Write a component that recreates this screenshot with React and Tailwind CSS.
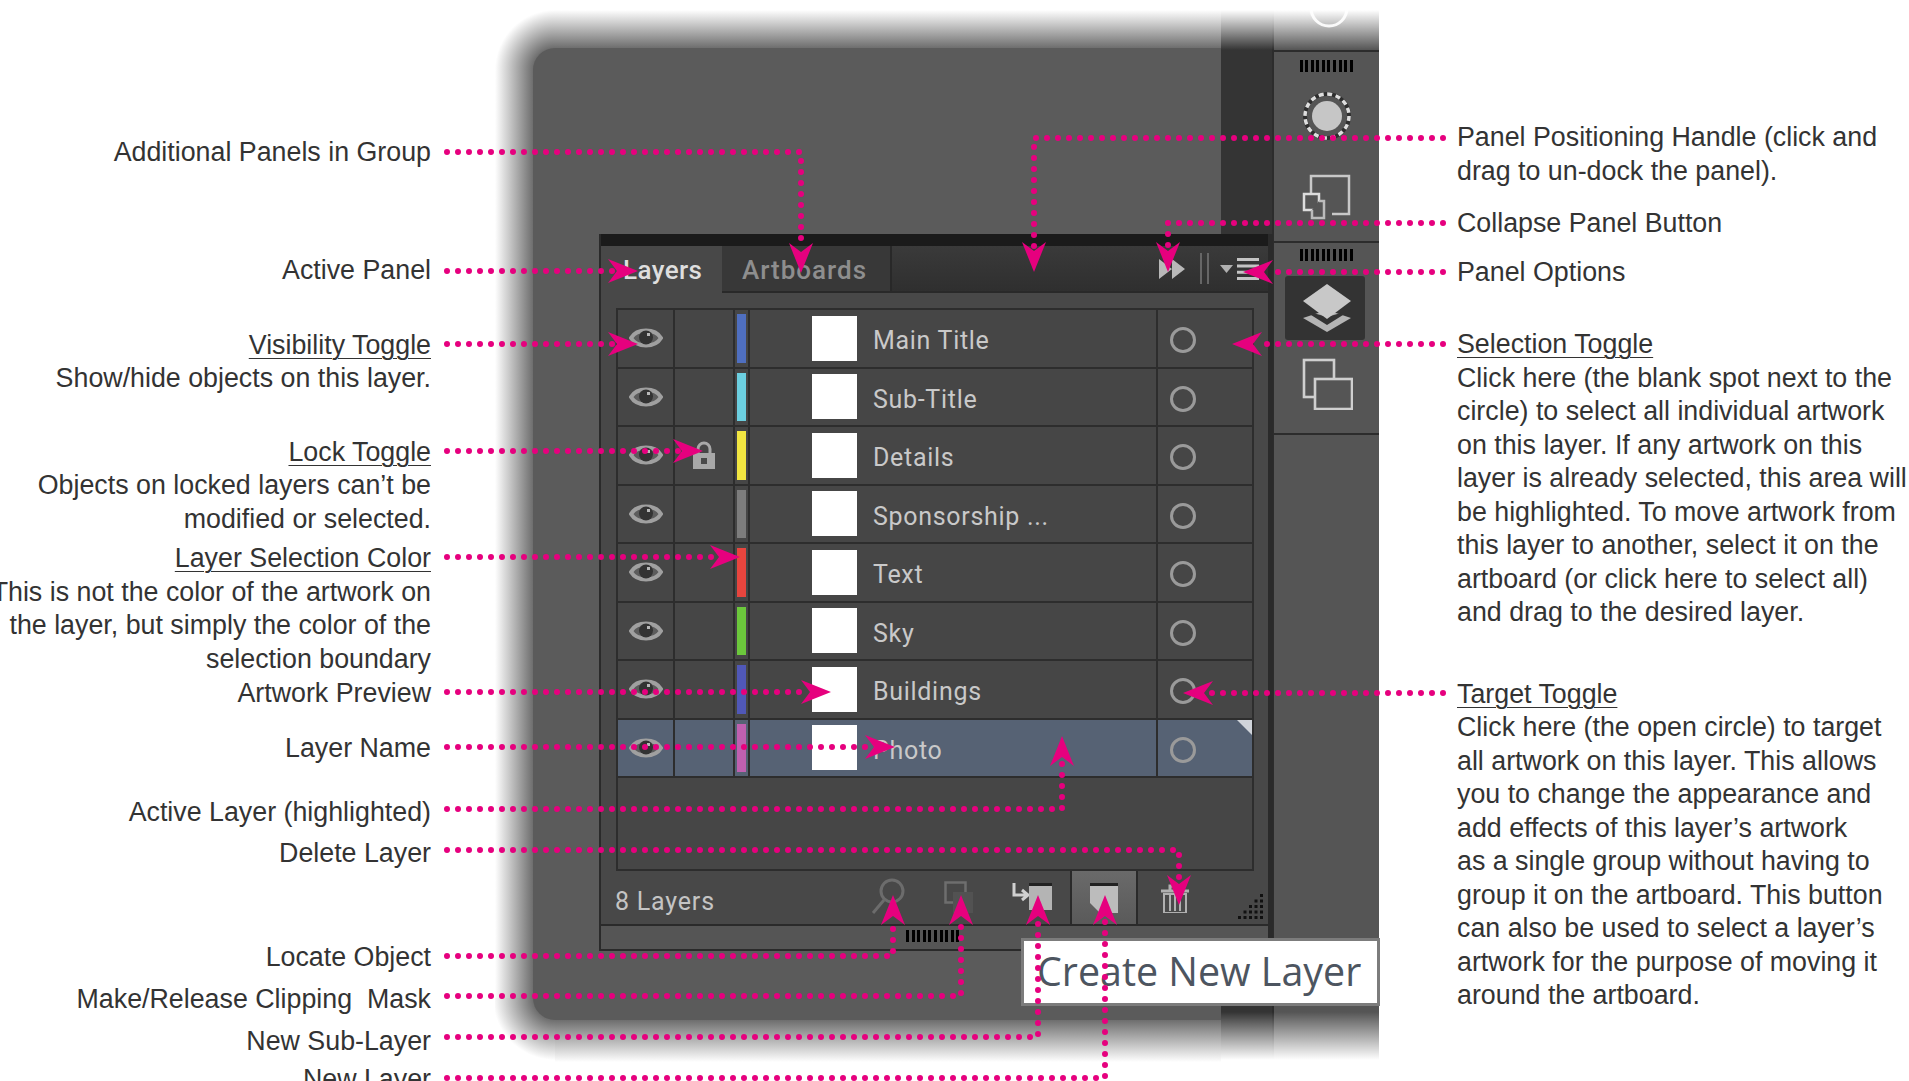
const labelFont = "font-['Liberation_Sans',Arial,sans-serif] text-[26.8px] leading-[33.5px] text-[#333] whitespace-nowrap";

// left column callouts, mt is the gap to the previous block
const leftLabels = [
  { mt: "mt-[136px]", lines: ["Additional Panels in Group"] },
  { mt: "mt-[84.5px]", lines: ["Active Panel"] },
  { mt: "mt-[41px]", title: "Visibility Toggle", lines: ["Show/hide objects on this layer."] },
  { mt: "mt-[40px]", title: "Lock Toggle", lines: ["Objects on locked layers can’t be", "modified or selected."] },
  { mt: "mt-[6px]", title: "Layer Selection Color", lines: ["This is not the color of the artwork on", "the layer, but simply the color of the", "selection boundary"] },
  { mt: "mt-[1px]", lines: ["Artwork Preview"] },
  { mt: "mt-[21.5px]", lines: ["Layer Name"] },
  { mt: "mt-[30px]", lines: ["Active Layer (highlighted)"] },
  { mt: "mt-[8px]", lines: ["Delete Layer"] },
  { mt: "mt-[70.5px]", lines: ["Locate Object"] },
  { mt: "mt-[8px]", lines: ["Make/Release Clipping\u00a0 Mask"] },
  { mt: "mt-[8.5px]", lines: ["New Sub-Layer"] },
  { mt: "mt-[4.5px]", lines: ["New Layer"] },
];

const rightLabels = [
  { mt: "mt-[121px]", lines: ["Panel Positioning Handle (click and", "drag to un-dock the panel)."] },
  { mt: "mt-[19px]", lines: ["Collapse Panel Button"] },
  { mt: "mt-[15.5px]", lines: ["Panel Options"] },
  {
    mt: "mt-[38.5px]",
    title: "Selection Toggle",
    lines: [
      "Click here (the blank spot next to the",
      "circle) to select all individual artwork",
      "on this layer. If any artwork on this",
      "layer is already selected, this area will",
      "be highlighted. To move artwork from",
      "this layer to another, select it on the",
      "artboard (or click here to select all)",
      "and drag to the desired layer.",
    ],
  },
  {
    mt: "mt-[48px]",
    title: "Target Toggle",
    lines: [
      "Click here (the open circle) to target",
      "all artwork on this layer. This allows",
      "you to change the appearance and",
      "add effects of this layer’s artwork",
      "as a single group without having to",
      "group it on the artboard. This button",
      "can also be used to select a layer’s",
      "artwork for the purpose of moving it",
      "around the artboard.",
    ],
  },
];

const layers = [
  { name: "Main Title", bar: "bg-[#4f6fc0]" },
  { name: "Sub-Title", bar: "bg-[#6ccfe0]" },
  { name: "Details", bar: "bg-[#f2e641]", locked: true },
  { name: "Sponsorship ...", bar: "bg-[#7d7d7d]" },
  { name: "Text", bar: "bg-[#e8453e]" },
  { name: "Sky", bar: "bg-[#6cc83c]" },
  { name: "Buildings", bar: "bg-[#5058b8]" },
  { name: "Photo", bar: "bg-[#c060b0]", active: true },
];

// leader lines in page coordinates, the last point is the arrow tip
const leaders = [
  [[447, 152], [801, 152], [801, 273]],
  [[1443, 138], [1034, 138], [1034, 272]],
  [[1443, 223], [1168, 223], [1168, 272]],
  [[1443, 272], [1243, 272]],
  [[447, 271], [638, 271]],
  [[447, 344], [638, 344]],
  [[1443, 344], [1232, 344]],
  [[447, 451], [703, 451]],
  [[447, 557], [740, 557]],
  [[447, 692], [831, 692]],
  [[1443, 693], [1183, 693]],
  [[447, 747], [895, 747]],
  [[447, 809], [1062, 809], [1062, 736]],
  [[447, 850], [1179, 850], [1179, 905]],
  [[447, 956], [893, 956], [893, 895]],
  [[447, 996], [961, 996], [961, 895]],
  [[447, 1037], [1038, 1037], [1038, 895]],
  [[447, 1078], [1105, 1078], [1105, 895]],
];

const Label = ({ item, align }) => (
  <div className={item.mt + " " + align}>
    {item.title && <div className="underline underline-offset-[4px] decoration-1">{item.title}</div>}
    {item.lines.map((l) => (
      <div key={l}>{l}</div>
    ))}
  </div>
);

const Leaders = () => (
  <svg className="absolute left-0 top-0 z-20 pointer-events-none" width="1909" height="1081">
    {leaders.map((pts, i) => {
      const a = pts[pts.length - 2];
      const b = pts[pts.length - 1];
      const angle = (Math.atan2(b[1] - a[1], b[0] - a[0]) * 180) / Math.PI;
      // stop the dots before the arrow head
      const ux = Math.sign(b[0] - a[0]);
      const uy = Math.sign(b[1] - a[1]);
      const line = pts.slice(0, -1).concat([[b[0] - ux * 24, b[1] - uy * 24]]);
      return (
        <g key={i}>
          <polyline
            points={line.map((p) => p.join(",")).join(" ")}
            fill="none"
            stroke="#e6007e"
            strokeWidth="6"
            strokeLinecap="round"
            strokeDasharray="0 11"
          />
          <path
            d="M0 0L-30 -12L-21 0L-30 12Z"
            fill="#e6007e"
            transform={`translate(${b[0]} ${b[1]}) rotate(${angle})`}
          />
        </g>
      );
    })}
  </svg>
);

const Grip = () => (
  <div className="flex gap-[2.6px] h-[12px] w-[54px]">
    {[0, 1, 2, 3, 4, 5, 6, 7, 8, 9].map((i) => (
      <span key={i} className="w-[3px] h-full bg-black" />
    ))}
  </div>
);

const Eye = () => (
  <svg width="34" height="26" viewBox="0 0 34 26">
    <path d="M2 13C8 3 26 3 32 13C26 23 8 23 2 13Z" fill="#5c5c5c" stroke="#a0a0a0" strokeWidth="4" />
    <circle cx="17" cy="12.5" r="7" fill="#333" />
    <rect x="18" y="8" width="3" height="3" fill="#b8b8b8" />
  </svg>
);

const Lock = () => (
  <svg width="22" height="28" viewBox="0 0 22 28">
    <path d="M5 13V8a6 6 0 0 1 12 0V13" fill="none" stroke="#a8a8a8" strokeWidth="3" />
    <rect x="0" y="12" width="22" height="16" fill="#a8a8a8" />
    <rect x="8" y="17" width="6" height="6" fill="#4a4a4a" />
  </svg>
);

const Target = () => (
  <svg width="28" height="28" viewBox="0 0 28 28">
    <circle cx="14" cy="14" r="11.5" fill="none" stroke="#9a9a9a" strokeWidth="3" />
  </svg>
);

const LayerRow = ({ layer }) => (
  <div className={"flex h-[58.5px] border-b-2 border-[#2d2d2d] " + (layer.active ? "bg-[#566274]" : "") + " relative"}>
    <div className="w-[57px] border-r-2 border-[#2d2d2d] flex justify-center pt-[15px]">
      <Eye />
    </div>
    <div className="w-[58px] flex justify-center pt-[14px]">{layer.locked && <Lock />}</div>
    <div className="w-[17px] border-x-2 border-[#2d2d2d] px-[2px] py-[4px]">
      <div className={"h-full " + layer.bar} />
    </div>
    <div className="w-[408px] border-r-2 border-[#2d2d2d] flex items-center pl-[62px]">
      <div className="w-[45px] h-[45px] bg-white" />
      <span className="ml-[16px] mt-[5px] text-[25px] tracking-[0.7px] text-[#c9c9c9] font-['Roboto',sans-serif] whitespace-nowrap">{layer.name}</span>
    </div>
    <div className="flex-1 flex items-center pl-[11px] pt-[4px]">
      <Target />
    </div>
    {layer.active && (
      <svg className="absolute right-0 top-0" width="15" height="15">
        <path d="M0 0H15V15Z" fill="#d0d4da" />
      </svg>
    )}
  </div>
);

const Footer = () => (
  <div className="h-[55px] flex items-center pl-[14px] border-b-2 border-[#2a2a2a]">
    <div className="w-[255px] mt-[8px] text-[25px] tracking-[0.8px] text-[#c4c4c4] font-['Roboto',sans-serif]">8 Layers</div>
    <svg width="36" height="42" viewBox="0 0 36 42">
      <circle cx="22" cy="14" r="11" fill="none" stroke="#6c6c6c" strokeWidth="3" />
      <path d="M14 23L3 36" stroke="#6c6c6c" strokeWidth="3" />
    </svg>
    <svg className="ml-[38px]" width="30" height="34" viewBox="0 0 30 34">
      <rect x="1.5" y="1.5" width="20" height="20" fill="none" stroke="#6e6e6e" strokeWidth="2.5" />
      <rect x="9" y="11" width="20" height="21" fill="#525252" />
    </svg>
    <svg className="ml-[38px]" width="40" height="30" viewBox="0 0 40 30">
      <path d="M2 0V12H14M10 7L16 12L10 17" fill="none" stroke="#d0d0d0" strokeWidth="3" />
      <rect x="17" y="2" width="23" height="25" fill="#b4b4b4" />
      <rect x="17" y="0" width="23" height="3" fill="#222" />
    </svg>
    <div className="ml-[18px] w-[68px] h-full border-x-2 border-[#2a2a2a] bg-linear-to-b from-[#6a6a6a] to-[#5a5a5a] flex items-center justify-center">
      <svg width="28" height="30" viewBox="0 0 28 30">
        <path d="M0 3H28V30H10L0 20Z" fill="#bcbcbc" />
        <rect y="0" width="28" height="3" fill="#222" />
      </svg>
    </div>
    <svg className="ml-[23px]" width="28" height="30" viewBox="0 0 28 30">
      <path d="M0 8H28M9 7V3H19V7" fill="none" stroke="#b0b0b0" strokeWidth="3" />
      <path d="M3 11H25V30H3Z" fill="#4a4a4a" stroke="#b0b0b0" strokeWidth="2" />
      <path d="M9 12V28M14 12V28M19 12V28" stroke="#b0b0b0" strokeWidth="2" />
    </svg>
    <svg className="ml-[49px] mt-[18px]" width="26" height="26" viewBox="0 0 26 26" fill="#111">
      {[0, 1, 2, 3, 4].flatMap((r) =>
        [0, 1, 2, 3, 4].filter((c) => c + r >= 4).map((c) => <rect key={r + "-" + c} x={c * 5.5} y={r * 5.5} width="3" height="3" />)
      )}
    </svg>
  </div>
);

const Panel = () => (
  <div className="[grid-area:1/1] relative z-[11] ml-[66px] mt-[234px] w-[674px] h-[717px] flex flex-col border-l-2 border-r-[5px] border-b-2 border-[#2a2a2a] bg-[#484848] font-['Roboto',sans-serif]">
    <div className="h-[12px] bg-[#1b1b1b]" />
    <div className="h-[47px] flex bg-linear-to-b from-[#3a3a3a] to-[#2f2f2f] border-b-2 border-[#292929]">
      <div className="w-[121px] -mb-[2px] bg-[#484848] pl-[22px] pt-[2px] flex items-center text-[26px] tracking-[0.4px] font-medium text-[#dedede]">Layers</div>
      <div className="w-[170px] border-r-2 border-[#282828] bg-[#383838] pl-[20px] pt-[4px] flex items-center text-[26px] tracking-[1px] font-medium text-[#8e8e8e]">Artboards</div>
      <div className="flex-1 flex items-center justify-end pr-[9px]">
        <svg width="26" height="20" viewBox="0 0 26 20" fill="#b8b8b8">
          <path d="M0 0L13 10L0 20ZM13 0L26 10L13 20Z" />
        </svg>
        <div className="ml-[15px] w-[9px] h-[31px] border-x-2 border-[#666]" />
        <svg className="ml-[11px]" width="13" height="8" viewBox="0 0 13 8" fill="#b0b0b0">
          <path d="M0 0H13L6.5 8Z" />
        </svg>
        <svg className="ml-[4px]" width="22" height="22" viewBox="0 0 22 22" fill="#c4c4c4">
          <path d="M0 0h22v3H0zM0 6.4h22v3H0zM0 12.8h22v3H0zM0 19h22v3H0z" />
        </svg>
      </div>
    </div>
    <div className="mt-[15px] ml-[15px] w-[638px] h-[563px] border-2 border-[#2d2d2d] bg-[#464646]">
      {layers.map((l) => (
        <LayerRow key={l.name} layer={l} />
      ))}
    </div>
    <Footer />
    <div className="flex-1 bg-[#555] flex justify-center pt-[4px] pr-[3px]">
      <Grip />
    </div>
  </div>
);

// soft edge of the cropped screenshot, drawn as gradient strips round the gray block
const SoftEdge = () => (
  <>
    <div className="absolute -left-[38px] top-[22px] bottom-[22px] w-[38px] bg-linear-to-l from-[#6e6e6e] to-transparent" />
    <div className="absolute left-[22px] right-0 -top-[38px] h-[38px] bg-linear-to-t from-[#6e6e6e] to-transparent" />
    <div className="absolute left-[22px] right-0 -bottom-[42px] h-[42px] bg-linear-to-b from-[#6e6e6e] to-transparent" />
    <div className="absolute -left-[38px] -top-[38px] w-[60px] h-[60px] bg-[radial-gradient(circle_60px_at_100%_100%,#6e6e6e_22px,transparent_60px)]" />
    <div className="absolute -left-[38px] -bottom-[42px] w-[60px] h-[64px] bg-[radial-gradient(circle_62px_at_100%_0%,#6e6e6e_22px,transparent_62px)]" />
  </>
);

const DockBackground = () => (
  <div className="[grid-area:1/1] flex h-[1081px]">
    <div className="relative w-[688px] mt-[48px] h-[972px]">
      <SoftEdge />
      <div className="relative h-full rounded-l-[22px] bg-[#5b5b5b]" />
    </div>
    <div className="w-[51px] bg-[#343434] z-10" />
    <div className="w-[107px] bg-[#555] border-l-2 border-[#2c2c2c] flex flex-col z-10">
      <div className="h-[50px] flex justify-center">
        <svg width="60" height="40">
          <circle cx="32" cy="8" r="18" fill="none" stroke="#f0f0f0" strokeWidth="3" />
        </svg>
      </div>
      <div className="h-[193px] border-y-2 border-[#2c2c2c] flex flex-col items-center pt-[8px]">
        <Grip />
        <svg className="mt-[19px]" width="50" height="50" viewBox="0 0 50 50">
          <circle cx="25" cy="25" r="22" fill="none" stroke="#2e2e2e" strokeWidth="4" />
          <circle cx="25" cy="25" r="22" fill="none" stroke="#dedede" strokeWidth="3.5" strokeDasharray="5 3.6" />
          <circle cx="25" cy="25" r="15" fill="#c6c6c6" />
        </svg>
        <svg className="mt-[33px]" width="50" height="46" viewBox="0 0 50 46">
          <path d="M9 21V2H47V40H30" fill="none" stroke="#c8c8c8" strokeWidth="2.5" />
          <rect x="2" y="20" width="15" height="16" fill="#555" stroke="#ddd" strokeWidth="2.5" />
          <path d="M17 27H22V44H10V36" fill="#555" stroke="#bbb" strokeWidth="2.5" />
        </svg>
      </div>
      <div className="h-[192px] border-b-2 border-[#2c2c2c] flex flex-col items-center pt-[6px]">
        <Grip />
        <div className="mt-[15px] -ml-[3px] pl-[4px] w-[80px] h-[64px] rounded-[3px] bg-[#333] flex items-center justify-center">
          <svg width="48" height="48" viewBox="0 0 48 48">
            <path d="M24 26L48 34L24 48L0 34Z" fill="#b4b4b4" />
            <path d="M24 33L48 26L24 41L0 26Z" fill="#333" />
            <path d="M24 0L48 17L24 35L0 17Z" fill="#c8c8c8" />
          </svg>
        </div>
        <svg className="mt-[18px]" width="52" height="52" viewBox="0 0 52 52">
          <rect x="3" y="2" width="30" height="37" fill="none" stroke="#cfcfcf" strokeWidth="2.6" />
          <rect x="14" y="21" width="37" height="30" fill="#555" stroke="#cfcfcf" strokeWidth="2.6" />
        </svg>
      </div>
    </div>
  </div>
);

export default function App() {
  return (
    <div className={"relative w-[1909px] h-[1081px] overflow-hidden bg-white flex"}>
      <div className={"w-[431px] shrink-0 flex flex-col items-end " + labelFont}>
        {leftLabels.map((item, i) => (
          <Label key={i} item={item} align="text-right" />
        ))}
      </div>

      <div className="relative ml-[102px] w-[846px] shrink-0 grid grid-cols-[846px] grid-rows-[1081px]">
        <DockBackground />
        <Panel />
        {/* fade of the screenshot at top and bottom of the dock */}
        <div className="absolute left-[688px] top-0 z-10 w-[158px] h-[50px] bg-linear-to-b from-white from-20% to-transparent" />
        <div className="absolute left-[688px] top-[1012px] z-10 w-[158px] h-[48px] bg-linear-to-b from-transparent to-white" />
        <div className="absolute left-[688px] top-[1060px] z-10 w-[158px] h-[21px] bg-white" />
        {/* tooltip */}
        <div className="absolute left-[488px] top-[938px] z-[12] w-[359px] h-[68px] border-[3px] border-[#7c7c7c] bg-white flex items-center pl-[13px] text-[39.4px] text-[#4d5560] font-['Open_Sans',sans-serif] whitespace-nowrap">
          Create New Layer
        </div>
      </div>

      <div className={"ml-[78px] w-[452px] shrink-0 flex flex-col " + labelFont}>
        {rightLabels.map((item, i) => (
          <Label key={i} item={item} align="text-left" />
        ))}
      </div>

      <Leaders />
    </div>
  );
}
